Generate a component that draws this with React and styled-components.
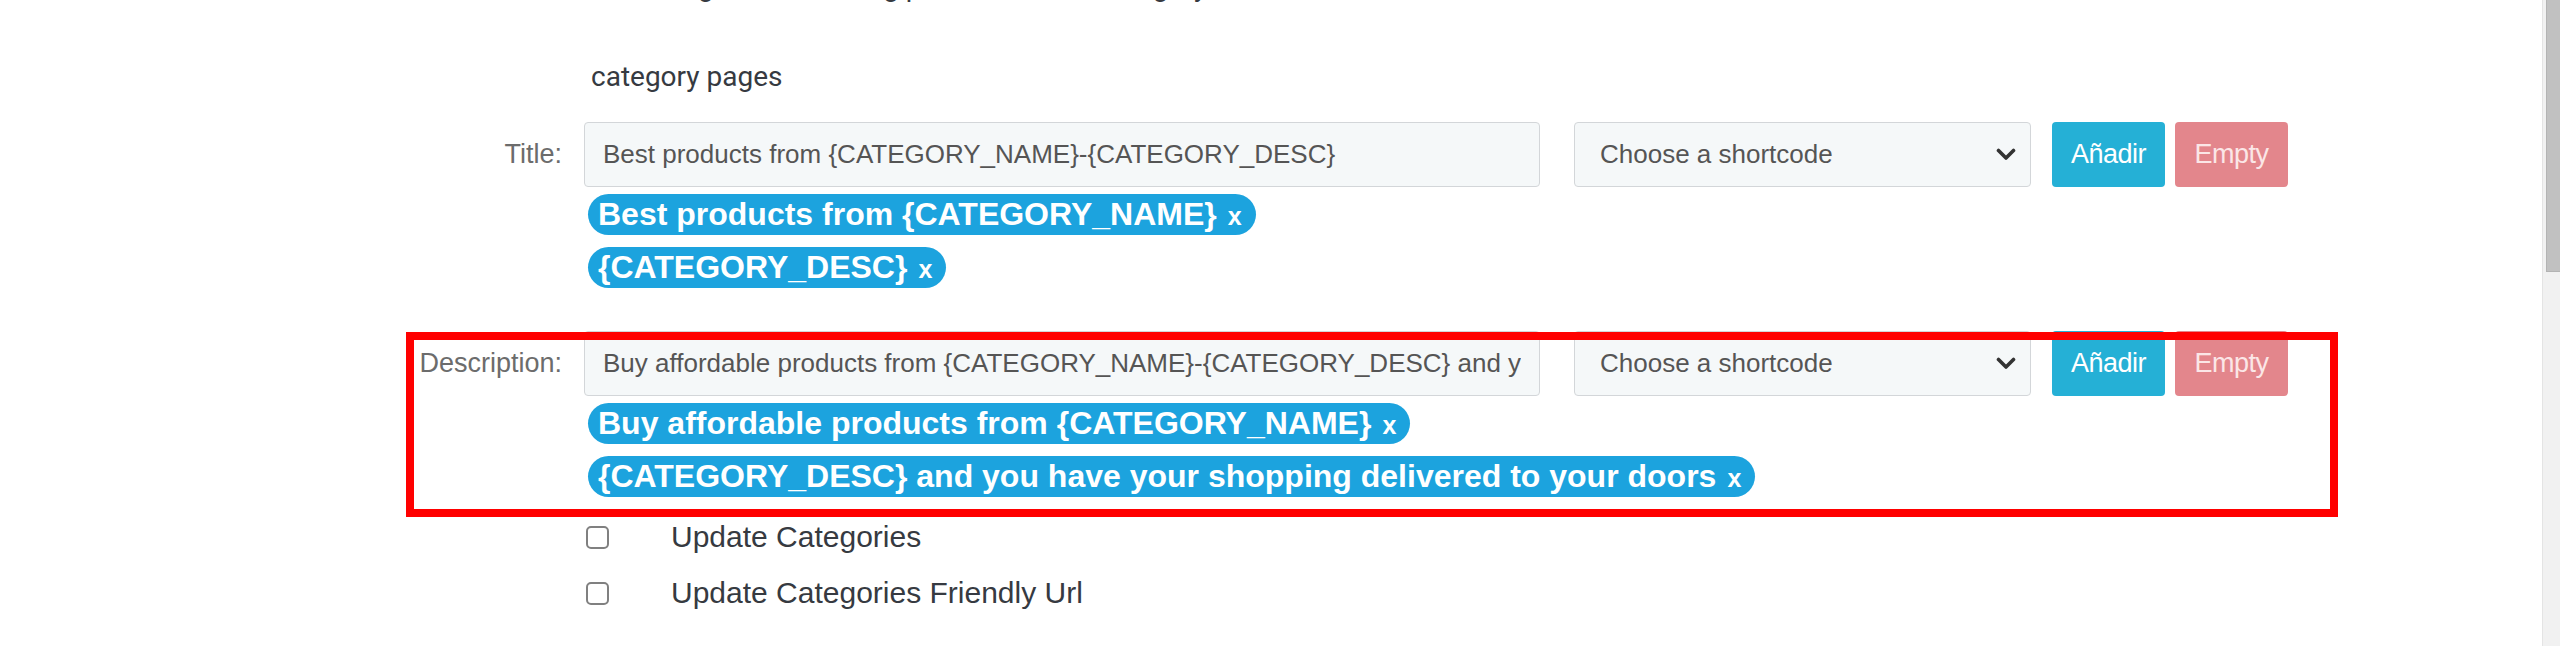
import React from 'react';
import styled, { createGlobalStyle } from 'styled-components';

const GlobalStyle = createGlobalStyle`
  html, body { margin: 0; padding: 0; background: #fff; overflow: hidden; }
  body { font-family: "Liberation Sans", Arial, sans-serif; }
  * { box-sizing: border-box; }
`;

const Page = styled.div`
  display: flex;
  width: 2560px;
  height: 646px;
  overflow: hidden;
  background: #fff;
`;

const Main = styled.main`
  flex: 1;
  min-width: 0;
`;

const ScrollTrack = styled.div`
  width: 18px;
  height: 100%;
  background: #f1f1f1;
  border-left: 1px solid #e4e4e4;
  padding-left: 3px;
`;

const ScrollThumb = styled.div`
  height: 272px;
  background: #c1c1c1;
  border-left: 1px solid #b3b3b3;
  border-bottom: 1px solid #b3b3b3;
`;

const Row = styled.div`
  position: relative;
  display: grid;
  grid-template-columns: 562px 1fr;
  column-gap: 22px;
  margin-top: ${(p) => p.$top || 0}px;
`;

const Prose = styled.p`
  grid-column: 2;
  margin: 0;
  padding-left: ${(p) => p.$indent || 7}px;
  font-family: "Roboto", "Liberation Sans", sans-serif;
  font-size: 28px;
  line-height: 30px;
  color: #363a41;
  white-space: nowrap;
`;

const Label = styled.label`
  grid-column: 1;
  text-align: right;
  font-size: 27px;
  line-height: 64px;
  color: #6c6c6c;
`;

const Field = styled.div`
  grid-column: 2;
  display: flex;
  flex-direction: column;
  align-items: flex-start;
`;

const Controls = styled.div`
  display: flex;
  align-items: center;
  height: 65px;
`;

const TextInput = styled.input`
  width: 956px;
  height: 65px;
  padding: 0 18px;
  border: 1px solid #d3d6d9;
  border-radius: 4px;
  background: #f5f8f9;
  font-family: "Liberation Sans", Arial, sans-serif;
  font-size: 26px;
  color: #555;
  outline: none;
`;

const SelectBox = styled.div`
  width: 457px;
  height: 65px;
  margin-left: 34px;
  padding: 0 14px 0 25px;
  display: flex;
  align-items: center;
  justify-content: space-between;
  border: 1px solid #d3d6d9;
  border-radius: 4px;
  background: #f5f8f9;
  font-size: 26px;
  color: #555;
`;

const Button = styled.button`
  width: 113px;
  height: 65px;
  margin-left: ${(p) => p.$gap}px;
  border: 0;
  border-radius: 4px;
  background: ${(p) => (p.$variant === 'danger' ? '#e3868c' : '#25b0d6')};
  color: ${(p) => (p.$variant === 'danger' ? '#fbe6e7' : '#fff')};
  font-family: "Liberation Sans", Arial, sans-serif;
  font-size: 27px;
  letter-spacing: -0.5px;
  padding: 0;
`;

const Chips = styled.div`
  display: flex;
  flex-direction: column;
  align-items: flex-start;
  gap: 12px;
  margin-top: 7px;
  padding-left: 4px;
`;

const Chip = styled.span`
  display: inline-block;
  height: 41px;
  line-height: 41px;
  padding: 0 14px 0 10px;
  border-radius: 21px;
  background: #1ca3de;
  color: #fff;
  font-size: 32px;
  font-weight: bold;
  white-space: nowrap;
`;

const ChipClose = styled.span`
  margin-left: 11px;
  font-size: 25px;
`;

const Highlight = styled.div`
  position: absolute;
  left: 406px;
  top: 1px;
  width: 1932px;
  height: 185px;
  border: 8px solid #ff0000;
  pointer-events: none;
`;

const CheckRow = styled.label`
  grid-column: 2;
  display: flex;
  align-items: center;
  height: 56px;
  padding-left: 2px;
  gap: 62px;
  font-size: 30px;
  color: #363a41;
`;

const Box = styled.span`
  flex: none;
  width: 23px;
  height: 23px;
  border: 2px solid #808080;
  border-radius: 5px;
  background: #fff;
`;

const Chevron = () => (
  <svg width="20" height="13" viewBox="0 0 20 13" aria-hidden="true">
    <path d="M2.5 2.5 L10 10 L17.5 2.5" fill="none" stroke="#333" strokeWidth="3.6" strokeLinecap="round" strokeLinejoin="round" />
  </svg>
);

const ShortcodeRow = ({ label, value, chips, top, highlight }) => (
  <Row $top={top}>
    <Label>{label}</Label>
    <Field>
      <Controls>
        <TextInput readOnly value={value} />
        <SelectBox>
          <span>Choose a shortcode</span>
          <Chevron />
        </SelectBox>
        <Button $gap={21}>Añadir</Button>
        <Button $gap={10} $variant="danger">Empty</Button>
      </Controls>
      <Chips>
        {chips.map((c) => (
          <Chip key={c}>
            {c}
            <ChipClose>x</ChipClose>
          </Chip>
        ))}
      </Chips>
    </Field>
    {highlight && <Highlight />}
  </Row>
);

export default function App() {
  return (
    <>
      <GlobalStyle />
      <Page>
        <Main>
          <Row $top={-28}>
            <Prose $indent={42}>Settings for the listing products in the category</Prose>
          </Row>
          <Row $top={60}>
            <Prose>category pages</Prose>
          </Row>
          <ShortcodeRow
            top={30}
            label="Title:"
            value="Best products from {CATEGORY_NAME}-{CATEGORY_DESC}"
            chips={['Best products from {CATEGORY_NAME}', '{CATEGORY_DESC}']}
          />
          <ShortcodeRow
            top={43}
            highlight
            label="Description:"
            value="Buy affordable products from {CATEGORY_NAME}-{CATEGORY_DESC} and you have your shopping delivered to your doors"
            chips={[
              'Buy affordable products from {CATEGORY_NAME}',
              '{CATEGORY_DESC} and you have your shopping delivered to your doors',
            ]}
          />
          <Row $top={12}>
            <CheckRow>
              <Box />
              Update Categories
            </CheckRow>
            <CheckRow>
              <Box />
              Update Categories Friendly Url
            </CheckRow>
          </Row>
        </Main>
        <ScrollTrack>
          <ScrollThumb />
        </ScrollTrack>
      </Page>
    </>
  );
}
